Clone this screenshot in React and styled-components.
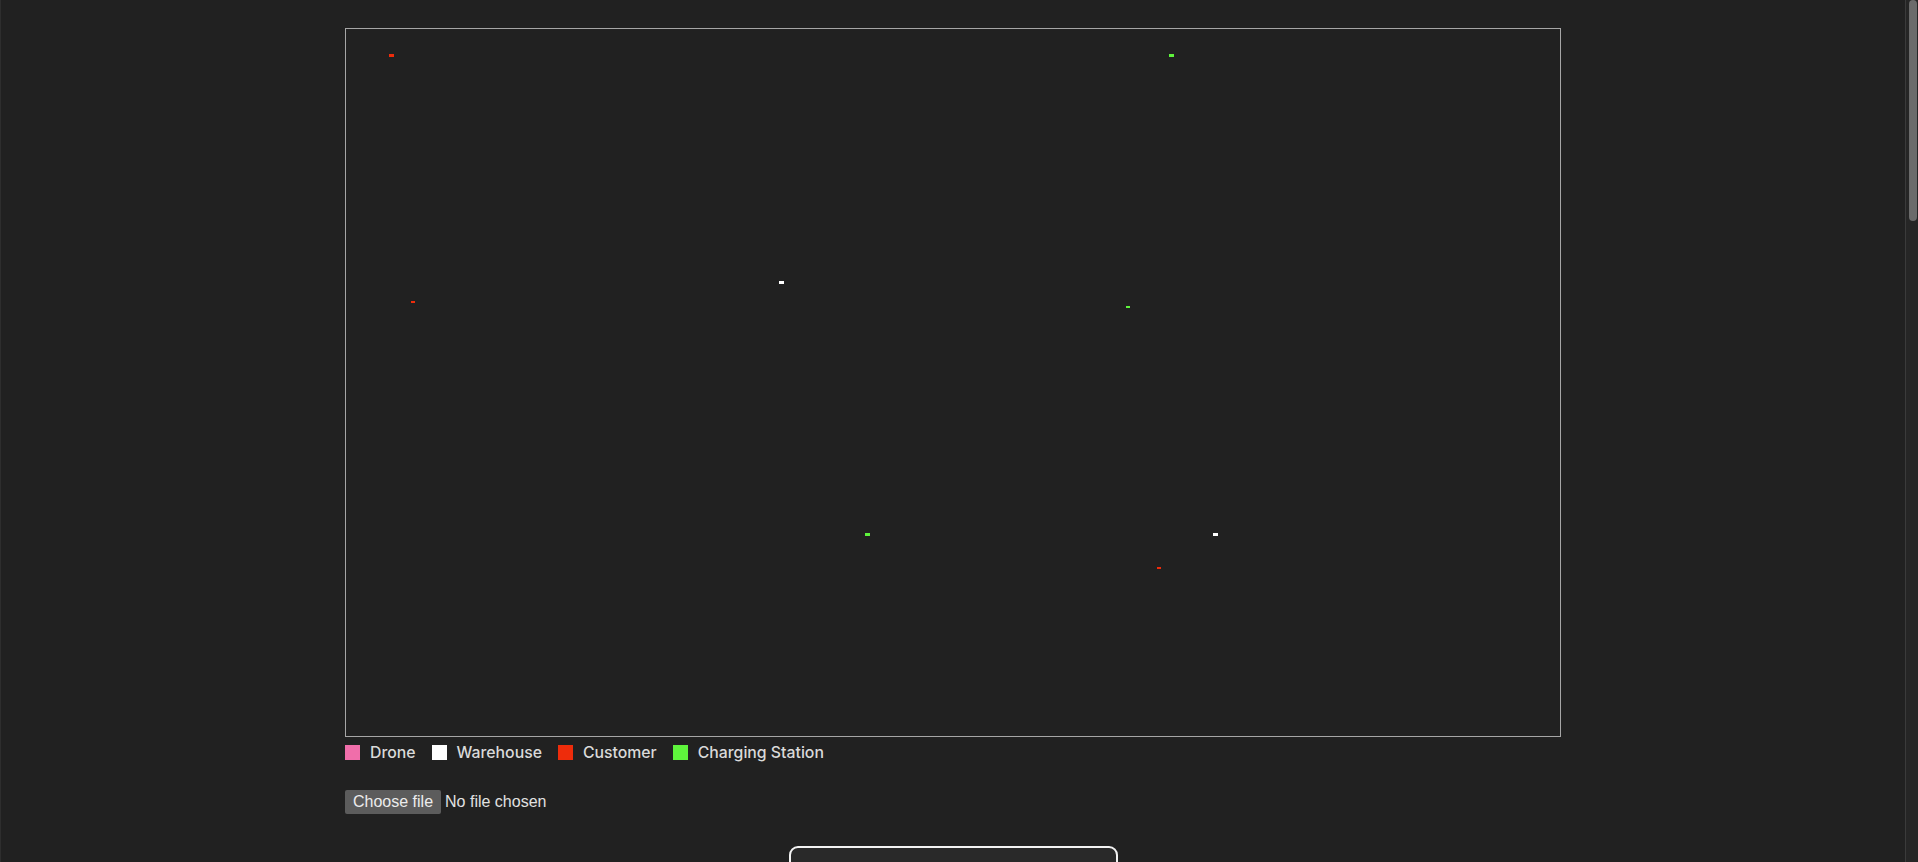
import React from "react";
import styled, { createGlobalStyle } from "styled-components";

const Global = createGlobalStyle`
  html, body { margin: 0; padding: 0; background: #212121; }
  html { scrollbar-width: none; }
  body { color: #dedede; font-family: "Liberation Sans", Arial, sans-serif; }
`;

const Page = styled.div`
  min-height: 3380px;
  box-sizing: border-box;
  padding: 28px 13px 0 0;
  display: flex;
  flex-direction: column;
  align-items: center;
  border-left: 1px solid #2e2e2e;
`;

const ScrollTrack = styled.div`
  position: fixed;
  top: 0;
  right: 0;
  bottom: 0;
  width: 13px;
  box-sizing: border-box;
  background: #262626;
  border-left: 1px solid #3b3b3b;
`;

const ScrollThumb = styled.div`
  position: absolute;
  top: 0;
  right: 1px;
  width: 8px;
  height: 221px;
  border-radius: 4px;
  background: #6b6b6b;
`;

const Column = styled.div`
  width: 1216px;
  display: flex;
  flex-direction: column;
`;

const MapFrame = styled.div`
  width: 1216px;
  height: 709px;
  box-sizing: border-box;
  border: 1px solid #a6a6a6;
  background: #212121;
  svg { display: block; }
`;

const Legend = styled.div`
  display: flex;
  align-items: center;
  gap: 16px;
  margin-top: 8px;
  height: 15px;
`;

const LegendItem = styled.div`
  display: flex;
  align-items: center;
  gap: 10px;
  font-family: Inter, "Liberation Sans", sans-serif;
  font-weight: 500;
  font-size: 15.8px;
  color: #dadada;
  line-height: 15px;
`;

const Swatch = styled.span`
  width: 15px;
  height: 15px;
  background: ${(p) => p.$color};
  flex: none;
`;

const FileRow = styled.label`
  display: flex;
  align-items: center;
  gap: 4px;
  margin-top: 30px;
  font-size: 16px;
  color: #e2e2e2;
  cursor: pointer;
  input { display: none; }
`;

const FileButton = styled.span`
  height: 24px;
  padding: 0 8px;
  box-sizing: border-box;
  display: flex;
  align-items: center;
  background: #5c5c5c;
  border-radius: 2px;
  color: #ececec;
`;

const ActionButton = styled.button`
  margin-top: 32px;
  width: 329px;
  height: 72px;
  border: 2px solid #f2f2f2;
  border-radius: 9px;
  background: #292929;
  color: #eee;
  font-size: 16px;
  font-family: Inter, sans-serif;
`;

const points = [
  { x: 389, y: 54, w: 5, h: 3, c: "#ee2c0b" },
  { x: 1169, y: 54, w: 5, h: 3, c: "#5ef43c" },
  { x: 779, y: 281, w: 5, h: 3, c: "#ffffff" },
  { x: 411, y: 301, w: 4, h: 2, c: "#ee2c0b" },
  { x: 1126, y: 306, w: 4, h: 2, c: "#5ef43c" },
  { x: 865, y: 533, w: 5, h: 3, c: "#5ef43c" },
  { x: 1213, y: 533, w: 5, h: 3, c: "#ffffff" },
  { x: 1157, y: 567, w: 4, h: 2, c: "#ee2c0b" },
];

const legend = [
  { label: "Drone", color: "#f06eaa" },
  { label: "Warehouse", color: "#ffffff" },
  { label: "Customer", color: "#ee2c0b" },
  { label: "Charging Station", color: "#5ef43c" },
];

export default function App() {
  return (
    <>
      <Global />
      <Page>
        <Column>
          <MapFrame>
            <svg width="1214" height="707" viewBox="0 0 1214 707">
              {points.map((p, i) => (
                <rect key={i} x={p.x - 346} y={p.y - 29} width={p.w} height={p.h} fill={p.c} />
              ))}
            </svg>
          </MapFrame>
          <Legend>
            {legend.map((l) => (
              <LegendItem key={l.label}>
                <Swatch $color={l.color} />
                {l.label}
              </LegendItem>
            ))}
          </Legend>
          <FileRow>
            <input type="file" />
            <FileButton>Choose file</FileButton>
            <span>No file chosen</span>
          </FileRow>
        </Column>
        <ActionButton>Run Simulation</ActionButton>
      </Page>
      <ScrollTrack>
        <ScrollThumb />
      </ScrollTrack>
    </>
  );
}
